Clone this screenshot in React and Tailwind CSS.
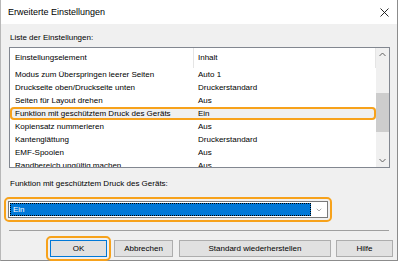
import { ChevronDown } from "lucide-react";

const rows = [
  ["Modus zum Überspringen leerer Seiten", "Auto 1"],
  ["Druckseite oben/Druckseite unten", "Druckerstandard"],
  ["Seiten für Layout drehen", "Aus"],
  ["Funktion mit geschütztem Druck des Geräts", "Ein", true],
  ["Kopiensatz nummerieren", "Aus"],
  ["Kantenglättung", "Druckerstandard"],
  ["EMF-Spoolen", "Aus"],
  ["Randbereich ungültig machen", "Aus"],
];

function Chevron({ up }) {
  return (
    <svg width="7" height="5" viewBox="0 0 7 5" className="block">
      <path
        d={up ? "M0.5 4 L3.5 1 L6.5 4" : "M0.5 1 L3.5 4 L6.5 1"}
        fill="none"
        stroke="#606060"
        strokeWidth="1"
      />
    </svg>
  );
}

function SettingsList() {
  return (
    <div className="flex w-[381px] h-[121px] border border-[#828790] bg-white mt-[4px]">
      <div className="flex flex-col w-[366px] overflow-hidden">
        {/* header */}
        <div className="flex h-[20px] shrink-0 items-center">
          <div className="w-[183px] pl-[5px]">Einstellungselement</div>
          <div className="w-px h-full bg-[#e5e5e5]" />
          <div className="flex-1 pl-[4px]">Inhalt</div>
          <div className="w-px h-full bg-[#e5e5e5]" />
        </div>
        {rows.map(([name, value, active]) => (
          <div
            key={name}
            className={
              active
                ? "flex h-[13px] shrink-0 items-center bg-[#f0f0f0] rounded-[4px] ring-2 ring-inset ring-[#f7a21b]"
                : "flex h-[13px] shrink-0 items-center"
            }
          >
            <div className="w-[184px] pl-[5px] whitespace-nowrap">{name}</div>
            <div className="flex-1 pl-[4px] whitespace-nowrap">{value}</div>
          </div>
        ))}
      </div>
      {/* scrollbar */}
      <div className="flex flex-col w-[13px] bg-[#f0f0f0]">
        <div className="h-[13px] flex items-center justify-center">
          <Chevron up />
        </div>
        <div className="flex-1">
          <div className="mt-[32px] h-[39px] bg-[#cdcdcd]" />
        </div>
        <div className="h-[13px] flex items-center justify-center">
          <Chevron />
        </div>
      </div>
    </div>
  );
}

function Button({ children, className = "", focused }) {
  return (
    <button
      className={
        "h-[17px] bg-[#e1e1e1] border text-[8px] leading-none text-black " +
        (focused ? "border-[#0078d7] " : "border-[#adadad] ") +
        className
      }
    >
      {children}
    </button>
  );
}

export default function App() {
  return (
    <div
      className="w-[399px] h-[262px] bg-white text-[8px] leading-[10px] text-black"
      style={{ fontFamily: '"Liberation Sans", Arial, sans-serif' }}
    >
      <div className="flex flex-col w-[398px] h-[261px] border-l border-r border-b border-l-[#b8b8b8] border-r-[#8c8c8c] border-b-[#8c8c8c] bg-[#f0f0f0]">
        {/* title bar */}
        <div className="flex h-[24px] shrink-0 items-center justify-between bg-white pl-[7px] pr-[7px]">
          <span className="text-[9px]">Erweiterte Einstellungen</span>
          <svg width="9" height="9" viewBox="0 0 9 9" className="mr-[1px]">
            <path d="M0.5 0.5 L8.5 8.5 M8.5 0.5 L0.5 8.5" stroke="#111" strokeWidth="0.9" />
          </svg>
        </div>

        <div className="flex flex-col pl-[8px] pt-[9px]">
          <div className="h-[10px] pl-[1px]">Liste der Einstellungen:</div>
          <SettingsList />

          <div className="h-[10px] mt-[11px] pl-[1px]">
            Funktion mit geschütztem Druck des Geräts:
          </div>

          <div className="ml-[-5px] mt-[8px] w-fit border-2 border-[#f7a21b] rounded-[5px] p-[2px]">
            <div className="flex w-[320px] h-[17px] border border-[#7a7a7a] bg-white p-[1px]">
              <div className="w-[301px] h-full bg-[#0078d7] border border-dotted border-black text-white pl-[2px] leading-[11px]">
                Ein
              </div>
              <div className="flex-1 flex items-center justify-center text-[#555]">
                <ChevronDown size={8} strokeWidth={1.5} />
              </div>
            </div>
          </div>

          <div className="mt-[8px] w-[380px] h-px bg-[#a0a0a0]" />

          <div className="flex items-center mt-[5px] ml-[37px]">
            <div className="border-2 border-[#f7a21b] rounded-[5px] p-[2px]">
              <Button focused className="w-[57px] block">
                OK
              </Button>
            </div>
            <Button className="w-[59px] ml-[3px]">Abbrechen</Button>
            <Button className="w-[152px] ml-[6px]">Standard wiederherstellen</Button>
            <Button className="w-[57px] ml-[5px]">Hilfe</Button>
          </div>
        </div>
      </div>
    </div>
  );
}
